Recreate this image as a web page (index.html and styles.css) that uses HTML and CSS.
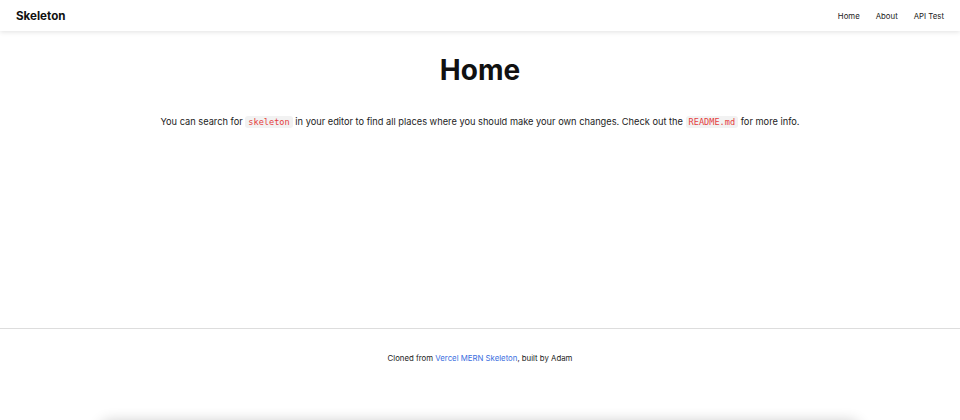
FILE: index.html
```html
<!DOCTYPE html>
<html lang="en">
<head>
<meta charset="utf-8">
<title>Skeleton</title>
<link rel="stylesheet" href="styles.css">
</head>
<body>
<div class="page">
  <header class="topbar">
    <a class="brand" href="#">Skeleton</a>
    <nav class="nav">
      <a href="#">Home</a>
      <a href="#">About</a>
      <a href="#">API Test</a>
    </nav>
  </header>
  <main class="main">
    <h1 class="title">Home</h1>
    <p class="intro">You can search for <code>skeleton</code> in your editor to find all places where you should make your own changes. Check out the <code>README.md</code> for more info.</p>
  </main>
  <footer class="footer">
    <p>Cloned from <a href="#">Vercel MERN Skeleton</a>, built by Adam</p>
  </footer>
  <div class="below"></div>
</div>
</body>
</html>
```

FILE: styles.css
```css
* { box-sizing: border-box; }
html, body { margin: 0; padding: 0; background: #fff; }
body {
  font-family: Inter, "Noto Sans", "Liberation Sans", sans-serif;
  color: #111;
  overflow: hidden;
}
.topbar {
  height: 31px;
  display: flex;
  align-items: center;
  justify-content: space-between;
  padding: 0 16px;
  box-shadow: 0 1px 5px rgba(0,0,0,0.12);
  position: relative;
  z-index: 1;
}
.brand {
  font-size: 11.6px;
  font-weight: 700;
  color: #111;
  text-decoration: none;
}
.nav {
  display: flex;
  gap: 16px;
}
.nav a {
  font-size: 7.8px;
  color: #222;
  text-decoration: none;
}
.main {
  height: 297px;
  display: flex;
  flex-direction: column;
  align-items: center;
  padding-top: 21px;
}
.title {
  margin: 0;
  font-size: 28px;
  font-weight: 700;
  line-height: 36px;
  color: #111;
}
.intro {
  margin: 27px 0 0;
  font-size: 9.25px;
  line-height: 14px;
  color: #222;
}
code {
  font-family: "DejaVu Sans Mono", "Liberation Mono", monospace;
  font-size: 8.6px;
  color: #e53e3e;
  background: #f2f2f2;
  border-radius: 3px;
  padding: 1px 3px;
}
.footer {
  border-top: 1px solid #ddd;
  height: 60px;
  display: flex;
  justify-content: center;
  padding-top: 24px;
}
.footer p {
  margin: 0;
  font-size: 7.8px;
  color: #222;
}
.footer a {
  color: #3b6fe0;
  text-decoration: none;
}
.below {
  margin: 33px 100px 0;
  height: 40px;
  box-shadow: 0 0 14px rgba(0,0,0,0.2);
  border-radius: 10px;
}
```
